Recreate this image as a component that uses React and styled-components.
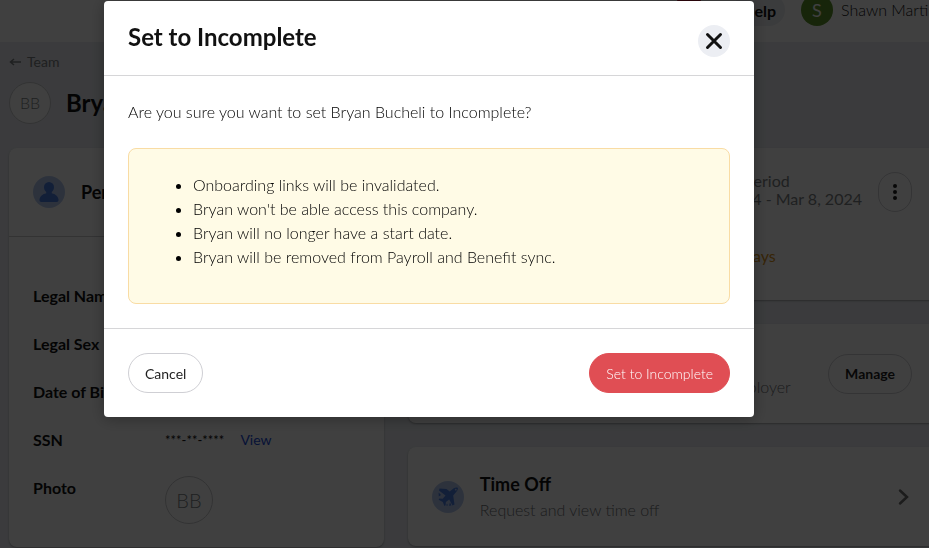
import React, { useState } from 'react';
import styled, { createGlobalStyle } from 'styled-components';

const GlobalStyle = createGlobalStyle`
    * {
        box-sizing: border-box;
    }
    body {
        margin: 0;
        background-color: #e9ecf1;
        color: #111;
        font-family: Lato, "Open Sans", sans-serif;
        font-size: 16px;
        font-weight: 300;
        line-height: 24px;
    }
    button {
        font-family: inherit;
        color: inherit;
        cursor: pointer;
    }
    h1, h2, h3, p, ul, dl, dd {
        margin: 0;
    }
`;

const Page = styled.div`
    min-height: 100vh;
    overflow: hidden;
`;

// the page is scrolled a little, so the top of the bar is out of view
const TopBar = styled.header`
    display: flex;
    align-items: center;
    justify-content: flex-end;
    gap: 16px;
    height: 64px;
    margin-top: -22px;
    background-color: #fff;
`;

const HelpButton = styled.button`
    height: 32px;
    padding: 0 9px;
    border: 0;
    border-radius: 16px;
    background-color: #eceef3;
    font-size: 16px;
    font-weight: 700;
`;

const AlertButton = styled.button`
    width: 24px;
    height: 24px;
    margin-right: 16px;
    border: 0;
    border-radius: 4px;
    background-color: #b3122f;
`;

const UserMenu = styled.div`
    display: flex;
    align-items: center;
    gap: 8px;
    width: 128px;
    white-space: nowrap;
    overflow: hidden;
`;

const UserBadge = styled.span`
    flex: none;
    width: 32px;
    height: 32px;
    border-radius: 50%;
    background-color: #5c942a;
    color: #fff;
    font-size: 18px;
    font-weight: 400;
    line-height: 32px;
    text-align: center;
`;

const Content = styled.main`
    margin-right: -7px;
    padding: 7px 0 0 9px;
`;

const BackLink = styled.a`
    display: inline-flex;
    align-items: center;
    gap: 5px;
    color: #7d7f83;
    font-size: 14px;
    font-weight: 400;
    text-decoration: none;
`;

const PersonHeading = styled.div`
    display: flex;
    align-items: center;
    gap: 15px;
    margin: 8px 0 24px;
`;

const Initials = styled.span`
    flex: none;
    width: ${props => props.size}px;
    height: ${props => props.size}px;
    border: 1px solid #c9cacc;
    border-radius: 50%;
    background-color: #fff;
    color: #7d7f83;
    font-size: ${props => (props.size > 42 ? 20 : 16)}px;
    line-height: ${props => props.size - 2}px;
    text-align: center;
`;

const PageTitle = styled.h1`
    font-size: 24px;
    line-height: 24px;
`;

const Columns = styled.div`
    display: grid;
    grid-template-columns: minmax(0, 22fr) minmax(0, 31fr);
    gap: 24px;
    align-items: start;
`;

const Stack = styled.div`
    display: grid;
    gap: 24px;
`;

const Card = styled.section`
    border-radius: 8px;
    background-color: #fff;
    box-shadow: 0 1px 2px rgba(0, 0, 0, .3);
`;

const CardHeader = styled.div`
    display: flex;
    align-items: center;
    gap: 16px;
    height: 89px;
    padding: 0 24px;
    border-bottom: 1px solid #c9cacc;
`;

const CardTitle = styled.h2`
    font-size: 18px;
    line-height: 26px;
`;

const RoundIcon = styled.span`
    display: flex;
    align-items: center;
    justify-content: center;
    flex: none;
    width: 32px;
    height: 32px;
    border-radius: 50%;
    background-color: #b4c8f0;
    color: #4a7ce0;
`;

const Details = styled.dl`
    display: grid;
    gap: 24px;
    padding: 47px 24px 23px;
`;

const DetailRow = styled.div`
    display: grid;
    grid-template-columns: 132px 1fr;
    height: ${props => (props.tall ? 48 : 24)}px;

    dt {
        font-weight: 700;
    }
    dd {
        display: flex;
        gap: 16px;
    }
`;

const MaskedValue = styled.span`
    font-size: 13px;
    font-weight: 400;
`;

const ViewLink = styled.a`
    color: #1a4bd8;
    font-size: 14px;
    font-weight: 400;
    text-decoration: none;
`;

const PayCard = styled(Card)`
    padding: 24px 24px 32px;
`;

const PayTop = styled.div`
    display: flex;
    justify-content: flex-end;
    gap: 16px;
    margin-bottom: 32px;
`;

const PayPeriod = styled.p`
    color: #7d7f83;
    font-weight: 400;
    line-height: 18px;
`;

const PayNotice = styled.p`
    padding-left: 48px;
    color: #d9921a;
    font-weight: 400;
`;

const ActionCard = styled(Card)`
    display: flex;
    align-items: center;
    gap: 16px;
    padding: 24px;
`;

const ActionText = styled.div`
    flex: 1;
    white-space: nowrap;

    p {
        color: #6d6f73;
        line-height: 25px;
    }
`;

const PillButton = styled.button`
    height: 40px;
    padding: 0 16px;
    border: 1px solid ${props => (props.$danger ? '#e04e54' : '#cfcfd4')};
    border-radius: 20px;
    background-color: ${props => (props.$danger ? '#e04e54' : '#fff')};
    color: ${props => (props.$danger ? '#fff' : '#1f1f1f')};
    font-size: 14px;
    font-weight: ${props => (props.$strong ? 700 : props.$danger ? 300 : 400)};
`;

const KebabButton = styled(PillButton)`
    display: flex;
    align-items: center;
    justify-content: center;
    width: 34px;
    padding: 0;
`;

const Backdrop = styled.div`
    position: fixed;
    inset: 0;
    display: flex;
    align-items: flex-start;
    padding: 1px 175px 0 104px;
    background-color: rgba(0, 0, 0, .75);
`;

const Dialog = styled.div`
    flex: 1;
    border-radius: 4px;
    background-color: #fff;
    box-shadow: 0 2px 16px rgba(0, 0, 0, .3);
`;

const DialogHeader = styled.div`
    display: flex;
    align-items: flex-start;
    justify-content: space-between;
    padding: 24px 24px 18px;
    border-bottom: 1px solid #d6d6d8;
`;

const DialogTitle = styled.h2`
    font-size: 24px;
    line-height: 24px;
`;

const CloseButton = styled.button`
    display: flex;
    align-items: center;
    justify-content: center;
    width: 32px;
    height: 32px;
    padding: 0;
    border: 0;
    border-radius: 50%;
    background-color: #eceef3;
`;

const DialogBody = styled.div`
    display: grid;
    gap: 24px;
    padding: 24px;
    color: #000;
`;

const Warning = styled.div`
    padding: 24px 24px 34px;
    border: 1px solid #f9dca4;
    border-radius: 8px;
    background-color: #fffbe6;

    ul {
        padding-left: 40px;
    }
`;

const DialogFooter = styled.div`
    display: flex;
    justify-content: space-between;
    padding: 24px;
    border-top: 1px solid #d6d6d8;
`;

const PersonIcon = () => (
    <svg width="20" height="20" viewBox="0 0 20 20" fill="currentColor" aria-hidden="true">
        <path d="M10 0a5 5 0 0 1 5 5.200c0 2-.9 3.700-2.200 4.700v1.300c3.600.9 6.200 2.700 6.700 6.300.2 1.500-.4 2.500-1.800 2.500H2.300C.9 20 .3 19 .5 17.500c.5-3.600 3.100-5.400 6.700-6.300V9.900C5.900 8.900 5 7.200 5 5.200A5 5 0 0 1 10 0z" />
    </svg>
);

const PlaneIcon = () => (
    <svg width="20" height="20" viewBox="0 0 20 20" fill="currentColor" aria-hidden="true">
        <path d="M1.500 1.500 8.500 2l3.200 2.400L15.400 1.600C17 .4 19.400.3 19.800 1c.4.700-.3 2.600-1.600 4l-3 3.500 1.300 9-2 .9-3.300-6-3.300 2.600-.3 3.200-1.200.7-1.600-4L.6 12.800l.7-1.300 3.400.2 2.800-3.200L1 3.600z" />
        <path d="M.6 5.600 3 8 .8 9.400zM12 15.200l1.400 3.200-2.400.4zM9 16.600l1 2H8.200z" />
        <circle cx="17.800" cy="2.700" r=".9" fill="#b4c8f0" />
    </svg>
);

const ArrowLeftIcon = () => (
    <svg width="13" height="10" viewBox="0 0 13 10" fill="none" stroke="currentColor" strokeWidth="1.500" aria-hidden="true">
        <path d="M12 5H1.500M5 2 1.500 5 5 8" />
    </svg>
);

const DotsIcon = () => (
    <svg width="4" height="16" viewBox="0 0 4 16" fill="currentColor" aria-hidden="true">
        <circle cx="2" cy="2" r="2" />
        <circle cx="2" cy="8" r="2" />
        <circle cx="2" cy="14" r="2" />
    </svg>
);

const ChevronIcon = () => (
    <svg width="16" height="18" viewBox="0 0 16 18" fill="none" stroke="#6f6f6f" strokeWidth="2.500" strokeLinecap="round" aria-hidden="true">
        <path d="M4 2.500 11 9l-7 6.500" />
    </svg>
);

const CloseIcon = () => (
    <svg width="18" height="18" viewBox="0 0 18 18" fill="none" stroke="currentColor" strokeWidth="3" strokeLinecap="round" aria-hidden="true">
        <path d="M2.500 2.500l13 13M15.500 2.500l-13 13" />
    </svg>
);

const consequences = [
    'Onboarding links will be invalidated.',
    "Bryan won't be able access this company.",
    'Bryan will no longer have a start date.',
    'Bryan will be removed from Payroll and Benefit sync.'
];

function ConfirmDialog({ onClose }) {
    return (
        <Backdrop>
            <Dialog role="dialog" aria-modal="true" aria-labelledby="dialog-title">
                <DialogHeader>
                    <DialogTitle id="dialog-title">Set to Incomplete</DialogTitle>
                    <CloseButton aria-label="Close" onClick={onClose}><CloseIcon /></CloseButton>
                </DialogHeader>
                <DialogBody>
                    <p>Are you sure you want to set Bryan Bucheli to Incomplete?</p>
                    <Warning>
                        <ul>
                            {consequences.map(item => <li key={item}>{item}</li>)}
                        </ul>
                    </Warning>
                </DialogBody>
                <DialogFooter>
                    <PillButton onClick={onClose}>Cancel</PillButton>
                    <PillButton $danger onClick={onClose}>Set to Incomplete</PillButton>
                </DialogFooter>
            </Dialog>
        </Backdrop>
    );
}

function PersonalCard() {
    return (
        <Card>
            <CardHeader>
                <RoundIcon><PersonIcon /></RoundIcon>
                <CardTitle>Personal</CardTitle>
            </CardHeader>
            <Details>
                <DetailRow><dt>Legal Name</dt><dd /></DetailRow>
                <DetailRow><dt>Legal Sex</dt><dd /></DetailRow>
                <DetailRow><dt>Date of Birth</dt><dd /></DetailRow>
                <DetailRow>
                    <dt>SSN</dt>
                    <dd><MaskedValue>***-**-****</MaskedValue><ViewLink href="#ssn">View</ViewLink></dd>
                </DetailRow>
                <DetailRow tall>
                    <dt>Photo</dt>
                    <dd><Initials size={48}>BB</Initials></dd>
                </DetailRow>
            </Details>
        </Card>
    );
}

export default function App() {
    const [open, setOpen] = useState(true);

    return (
        <Page>
            <GlobalStyle />
            <TopBar>
                <AlertButton aria-label="Alerts" />
                <HelpButton>Help</HelpButton>
                <UserMenu>
                    <UserBadge>S</UserBadge>
                    <span>Shawn Martin</span>
                </UserMenu>
            </TopBar>
            <Content>
                <BackLink href="#team"><ArrowLeftIcon />Team</BackLink>
                <PersonHeading>
                    <Initials size={42}>BB</Initials>
                    <PageTitle>Bryan Bucheli</PageTitle>
                </PersonHeading>
                <Columns>
                    <PersonalCard />
                    <Stack>
                        <PayCard>
                            <PayTop>
                                <PayPeriod>Latest Pay Period<br />Feb 24, 2024 - Mar 8, 2024</PayPeriod>
                                <KebabButton aria-label="More"><DotsIcon /></KebabButton>
                            </PayTop>
                            <PayNotice>Payroll for this period will be due in 3 days</PayNotice>
                        </PayCard>
                        <ActionCard>
                            <RoundIcon />
                            <ActionText>
                                <CardTitle>Benefits</CardTitle>
                                <p>View and manage benefits with the employer</p>
                            </ActionText>
                            <PillButton $strong>Manage</PillButton>
                        </ActionCard>
                        <ActionCard>
                            <RoundIcon><PlaneIcon /></RoundIcon>
                            <ActionText>
                                <CardTitle>Time Off</CardTitle>
                                <p>Request and view time off</p>
                            </ActionText>
                            <ChevronIcon />
                        </ActionCard>
                    </Stack>
                </Columns>
            </Content>
            {open && <ConfirmDialog onClose={() => setOpen(false)} />}
        </Page>
    );
}
